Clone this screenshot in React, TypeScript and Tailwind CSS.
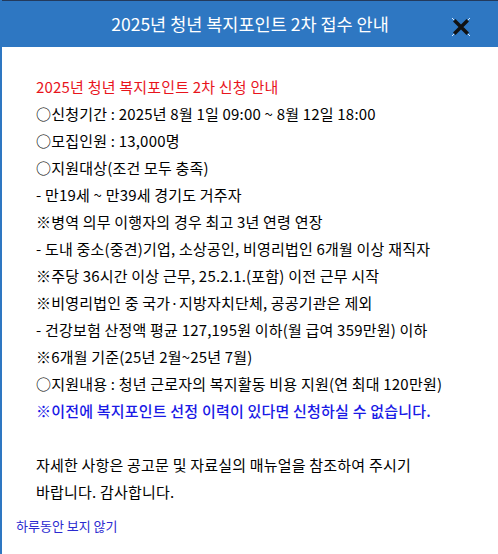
import React from 'react';

const lines: { text: string; tone?: 'red' | 'blue' }[] = [
  { text: '2025년 청년 복지포인트 2차 신청 안내', tone: 'red' },
  { text: '○신청기간 : 2025년 8월 1일 09:00 ~ 8월 12일 18:00' },
  { text: '○모집인원 : 13,000명' },
  { text: '○지원대상(조건 모두 충족)' },
  { text: '- 만19세 ~ 만39세 경기도 거주자' },
  { text: '※병역 의무 이행자의 경우 최고 3년 연령 연장' },
  { text: '- 도내 중소(중견)기업, 소상공인, 비영리법인 6개월 이상 재직자' },
  { text: '※주당 36시간 이상 근무, 25.2.1.(포함) 이전 근무 시작' },
  { text: '※비영리법인 중 국가·지방자치단체, 공공기관은 제외' },
  { text: '- 건강보험 산정액 평균 127,195원 이하(월 급여 359만원) 이하' },
  { text: '※6개월 기준(25년 2월~25년 7월)' },
  { text: '○지원내용 : 청년 근로자의 복지활동 비용 지원(연 최대 120만원)' },
  { text: '※이전에 복지포인트 선정 이력이 있다면 신청하실 수 없습니다.', tone: 'blue' },
];

const CloseIcon = () => (
  <svg width="24" height="24" viewBox="0 0 24 24">
    <path d="M3 3L21 21M21 3L3 21" stroke="#d6ebff" strokeWidth="1" />
    <path d="M6.5 6.5L17.5 17.5M17.5 6.5L6.5 17.5" stroke="#111" strokeWidth="3.5" strokeLinecap="square" />
  </svg>
);

const App: React.FC = () => {
  return (
    <div
      className="w-[498px] h-[554px] bg-white border-l-2 border-[#2e77c2] flex flex-col overflow-hidden"
      style={{ fontFamily: '"Noto Sans CJK KR", "Noto Sans", sans-serif' }}
    >
      <div className="h-[47px] shrink-0 bg-[#2e77c2] border-t border-[#233a5c] relative flex items-center justify-center">
        <span className="text-white text-[17.5px]">2025년 청년 복지포인트 2차 접수 안내</span>
        <button className="absolute left-[447px] top-[14px]">
          <CloseIcon />
        </button>
      </div>

      <div className="pl-[34px] pt-[26px] text-[15px] leading-[27px] tracking-[0.2px] text-black">
        {lines.map((l, i) => (
          <div
            key={i}
            className={
              l.tone === 'red'
                ? 'text-[#e8141c]'
                : l.tone === 'blue'
                ? 'text-[#1a1ae6] font-medium'
                : ''
            }
          >
            {l.text}
          </div>
        ))}
        <div className="h-[27px]" />
        <div>
          자세한 사항은 공고문 및 자료실의 매뉴얼을 참조하여 주시기
          <br />
          바랍니다. 감사합니다.
        </div>
      </div>

      <div className="pl-[14px] pt-[11px] text-[13px] text-[#2a2ad0]">하루동안 보지 않기</div>
    </div>
  );
};

export default App;
